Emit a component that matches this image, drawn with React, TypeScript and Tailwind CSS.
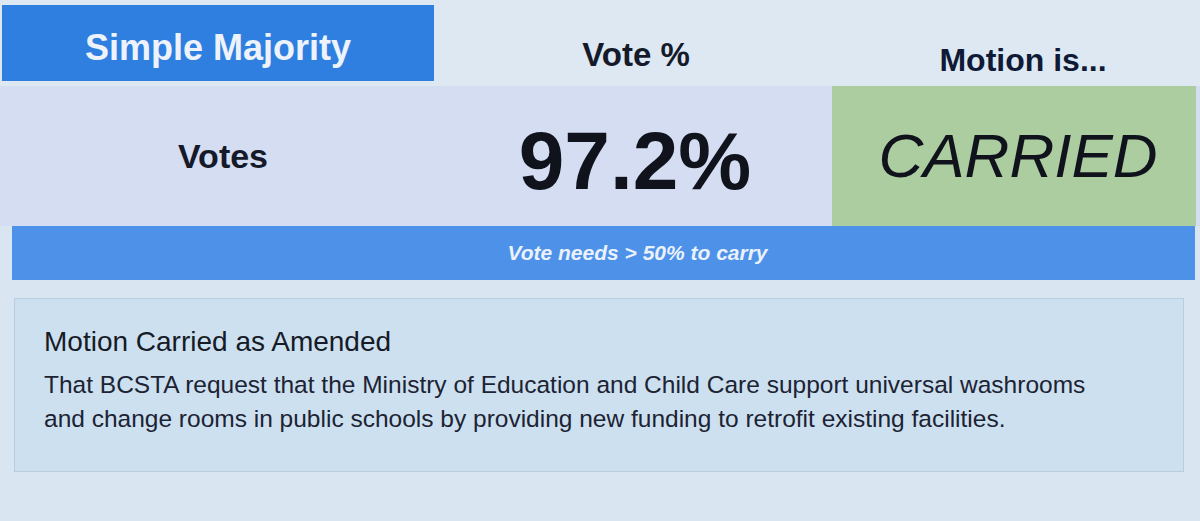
import React from 'react';

const motion = {
  rule: 'Simple Majority',
  percent: '97.2%',
  result: 'CARRIED',
  threshold: 'Vote needs > 50% to carry',
  title: 'Motion Carried as Amended',
  text: 'That BCSTA request that the Ministry of Education and Child Care support universal washrooms and change rooms in public schools by providing new funding to retrofit existing facilities.',
};

export default function App() {
  return (
    <div className="w-full h-[521px] overflow-hidden bg-[#d9e5f0] text-[#141a2a] font-['Liberation_Sans',Arimo,Helvetica,sans-serif]">
      {/* header row */}
      <div className="flex h-[86px] pt-[5px] bg-[#dde8f3]">
        <div className="ml-[2px] w-[432px] h-[76px] bg-[#2e7fe0] flex items-center justify-center pt-[10px]">
          <span className="text-[36px] font-bold leading-[40px] text-[#eef3fb]">{motion.rule}</span>
        </div>
        <div className="w-[398px] flex items-end justify-center pb-[12px] pl-[6px]">
          <span className="text-[33px] font-bold leading-[38px]">Vote %</span>
        </div>
        <div className="w-[366px] flex items-end justify-center pb-[7px] pl-[16px]">
          <span className="text-[32px] font-bold leading-[38px] text-[#0f1a36]">Motion is...</span>
        </div>
      </div>

      {/* results row */}
      <div className="flex h-[140px] bg-[#d4ddf2]">
        <div className="ml-[2px] w-[432px] flex items-center justify-center pl-[10px]">
          <span className="text-[34px] font-bold">Votes</span>
        </div>
        <div className="w-[398px] flex items-center justify-center pt-[10px] pl-[4px]">
          <span className="text-[82px] font-bold leading-none text-[#10131c]">{motion.percent}</span>
        </div>
        <div className="w-[364px] bg-[#abcd9f] flex items-center justify-center pl-[8px]">
          <span className="text-[62px] italic leading-none text-[#10131c]">{motion.result}</span>
        </div>
      </div>

      {/* threshold bar */}
      <div className="ml-[12px] mr-[5px] h-[54px] bg-[#4d91e8] flex items-center justify-center">
        <span className="text-[21px] font-bold italic text-[#eaf1fb] pl-[68px]">{motion.threshold}</span>
      </div>

      {/* motion text */}
      <div className="mt-[18px] ml-[14px] w-[1170px] h-[174px] border border-[#b8cddf] bg-[#cce0f0] pl-[29px] pt-[27px]">
        <div className="text-[28px] leading-[32px] text-[#161b26]">{motion.title}</div>
        <p className="mt-[10px] max-w-[1060px] text-[24.5px] leading-[34px] text-[#1c2333]">{motion.text}</p>
      </div>
    </div>
  );
}
